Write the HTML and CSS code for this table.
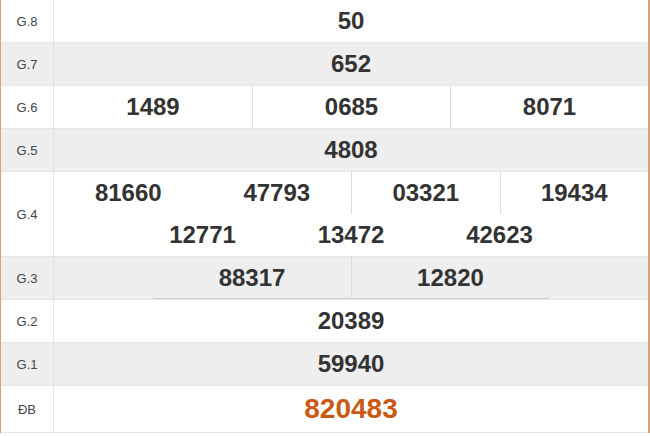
FILE: index.html
```html
<!DOCTYPE html>
<html>
<head>
<meta charset="utf-8">
<link rel="stylesheet" href="styles.css">
</head>
<body>
<div class="table">
  <div class="row">
    <div class="label">G.8</div>
    <div class="nums"><div class="num w1">50</div></div>
  </div>
  <div class="row alt">
    <div class="label">G.7</div>
    <div class="nums"><div class="num w1">652</div></div>
  </div>
  <div class="row">
    <div class="label">G.6</div>
    <div class="nums">
      <div class="num w3">1489</div>
      <div class="num w3 sep">0685</div>
      <div class="num w3 sep">8071</div>
    </div>
  </div>
  <div class="row alt">
    <div class="label">G.5</div>
    <div class="nums"><div class="num w1">4808</div></div>
  </div>
  <div class="row">
    <div class="label">G.4</div>
    <div class="nums">
      <div class="num w4">81660</div>
      <div class="num w4">47793</div>
      <div class="num w4 sep">03321</div>
      <div class="num w4 sep">19434</div>
      <div class="num w4">12771</div>
      <div class="num w4">13472</div>
      <div class="num w4">42623</div>
    </div>
  </div>
  <div class="row alt">
    <div class="label">G.3</div>
    <div class="nums">
      <div class="num w3 under">88317</div>
      <div class="num w3 under sep">12820</div>
    </div>
  </div>
  <div class="row">
    <div class="label">G.2</div>
    <div class="nums"><div class="num w1">20389</div></div>
  </div>
  <div class="row alt">
    <div class="label">G.1</div>
    <div class="nums"><div class="num w1">59940</div></div>
  </div>
  <div class="row last">
    <div class="label">ĐB</div>
    <div class="nums"><div class="num w1 special">820483</div></div>
  </div>
</div>
</body>
</html>
```
FILE: styles.css
```css
html, body {
  margin: 0;
  padding: 0;
  background: #ffffff;
}

.table {
  width: 650px;
  box-sizing: border-box;
  border-left: 1px solid #d9a07a;
  border-right: 2px solid #d9a07a;
  font-family: "Liberation Sans", Arial, sans-serif;
  color: #333333;
}

.row {
  display: flex;
  border-bottom: 1px solid #e6e6e6;
  background: #ffffff;
}

.row.alt {
  background: #eeeeee;
}

.label {
  width: 52px;
  flex: none;
  border-right: 1px solid #e2e2e2;
  display: flex;
  align-items: center;
  justify-content: center;
  font-size: 13px;
  color: #444444;
}

.nums {
  flex: 1;
  display: flex;
  flex-wrap: wrap;
  justify-content: center;
}

.num {
  height: 42px;
  box-sizing: border-box;
  display: flex;
  align-items: center;
  justify-content: center;
  font-size: 24px;
  font-weight: bold;
  color: #333333;
}

.w1 { width: 100%; }
.w3 { width: 33.3333%; }
.w4 { width: 25%; }

.sep {
  border-left: 1px solid #dddddd;
}

.under {
  border-bottom: 1px solid #cccccc;
}

.last .num {
  height: 46px;
}

.special {
  font-size: 28px;
  color: #c85a14;
}
```
